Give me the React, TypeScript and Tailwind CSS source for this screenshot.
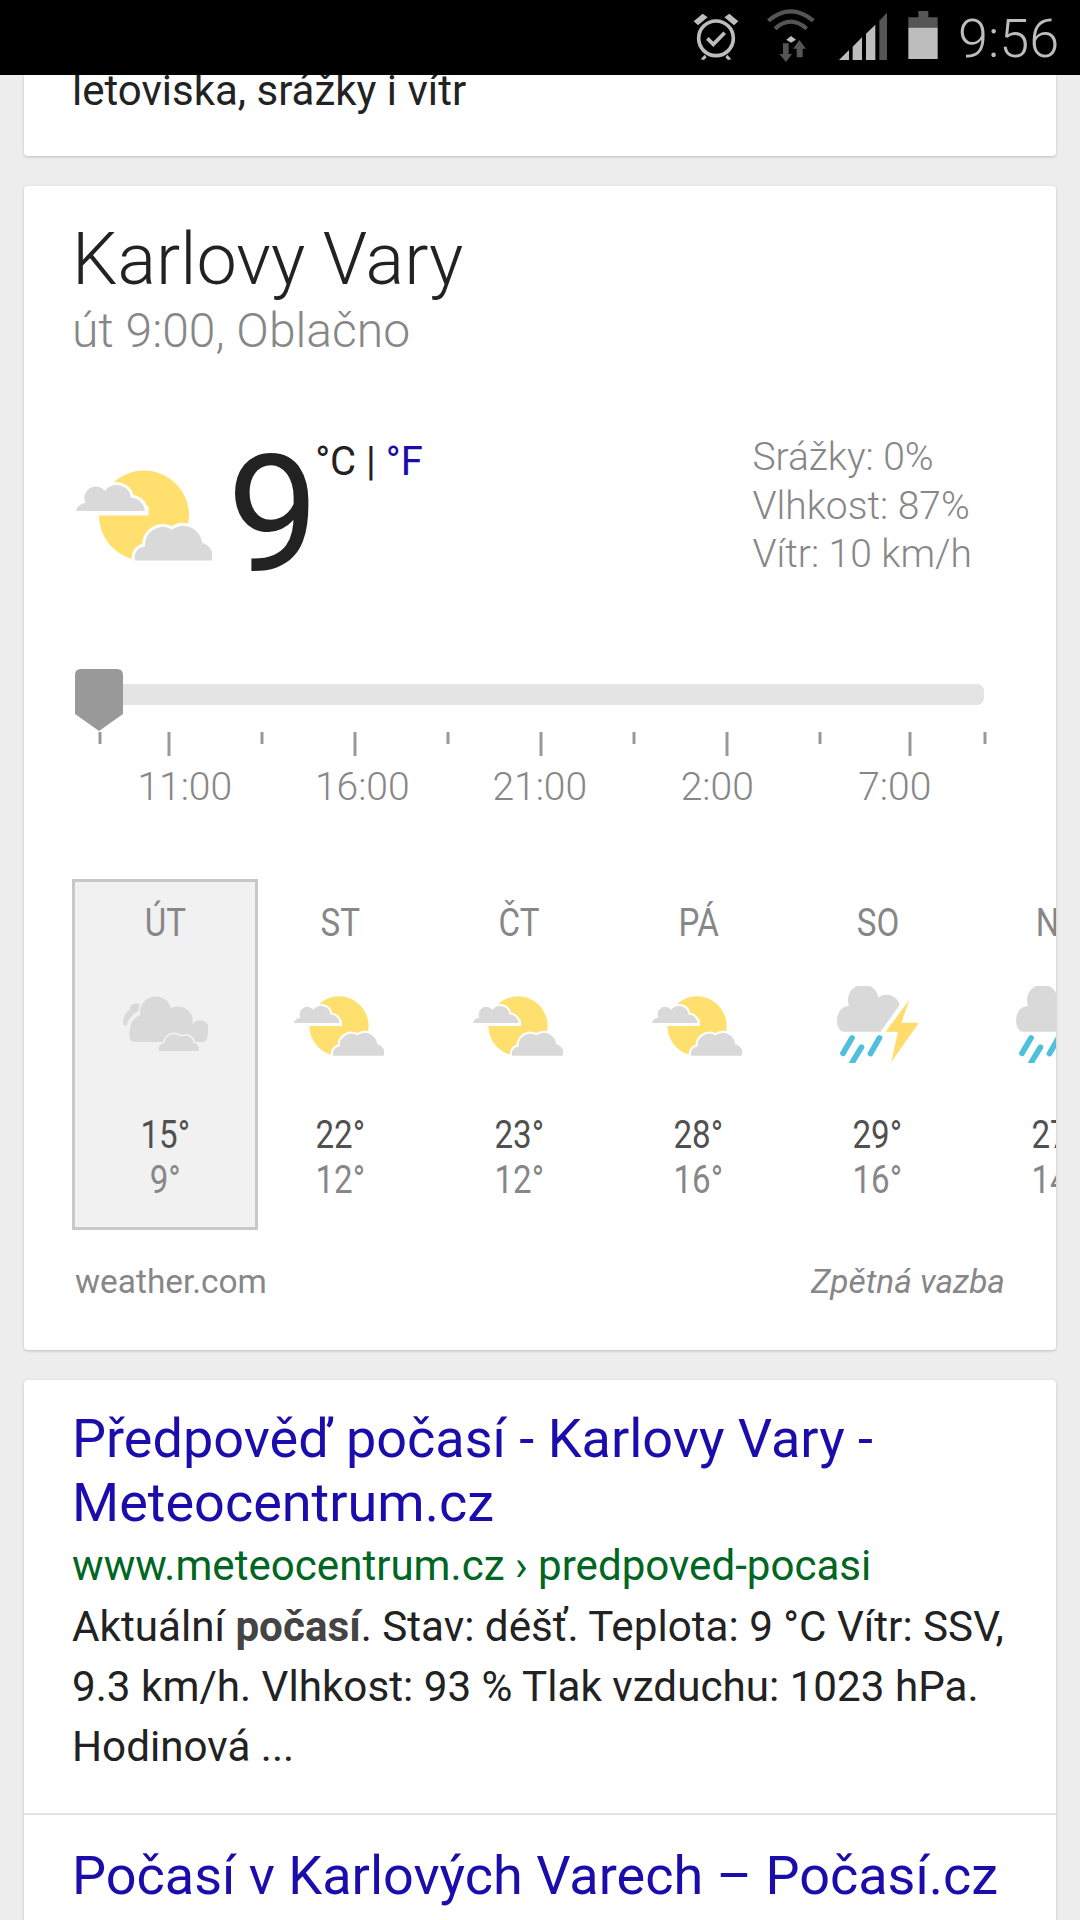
import React from 'react';

const GRAY = '#d9d9d9';

const PartlyCloudy: React.FC<{ className: string }> = ({ className }) => (
  <svg className={className} viewBox="0 0 136 91">
    <circle cx="68" cy="45.5" r="45" fill="#ffe06e" />
    <rect x="18" y="36" width="54.5" height="9.5" fill="#fff" />
    <path d="M0 41A11 9 0 0 1 9.5 33A11.5 11.5 0 0 1 29 21A14.5 14.5 0 0 1 55 27.5A15 15 0 0 1 69 41Z" fill={GRAY} stroke="#fff" strokeWidth="6" paintOrder="stroke" />
    <path d="M59 90.5A11 11 0 0 1 69 76.5A18 18 0 0 1 96 59.5A19 19 0 0 1 126 73A13 13 0 0 1 135.7 90.5Z" fill={GRAY} stroke="#fff" strokeWidth="6" paintOrder="stroke" />
  </svg>
);

const Cloudy: React.FC<{ className: string }> = ({ className }) => (
  <svg className={className} viewBox="188 375 255 168">
    <path d="M222 398Q238 394 238 404L234 420Q205 435 198 465Q186 465 189 445Q192 425 208 418Q206 402 222 398Z" fill={GRAY} />
    <path d="M222 513Q207 513 207 490Q207 445 240 432A47.1 47.1 0 0 1 332 412A44 44 0 0 1 396 460A27 27 0 0 1 442 490Q442 513 425 513Z" fill={GRAY} />
    <path d="M296 540A17 17 0 0 1 312 517A30 30 0 0 1 362 498A25 25 0 0 1 400 516A18 18 0 0 1 415 540Z" fill={GRAY} stroke="#f1f1f1" strokeWidth="10" paintOrder="stroke" />
  </svg>
);

const Storm: React.FC<{ className: string }> = ({ className }) => (
  <svg className={className} viewBox="170 108 248 230">
    <path d="M300 245L190 245Q170 240 170 210Q172 172 206 167A46 46 0 1 1 294 142A40 40 0 0 1 357 165Z" fill={GRAY} />
    <path d="M387 148L362 218L415 218L332 335L352 245L315 245Z" fill="#ffdc6b" />
    <path d="M188 309L215 263M215 337L243 291M270 310L297 263" stroke="#4fc0dc" strokeWidth="17" strokeLinecap="round" />
  </svg>
);

const days = [
  { name: 'ÚT', hi: '15°', lo: '9°', icon: 'cloudy' },
  { name: 'ST', hi: '22°', lo: '12°', icon: 'partly' },
  { name: 'ČT', hi: '23°', lo: '12°', icon: 'partly' },
  { name: 'PÁ', hi: '28°', lo: '16°', icon: 'partly' },
  { name: 'SO', hi: '29°', lo: '16°', icon: 'storm' },
  { name: 'NE', hi: '27°', lo: '14°', icon: 'storm' },
];

const ticks = [
  [100, 12], [169, 24], [262, 12], [355, 24], [448, 12], [541, 24], [634, 12], [727, 24], [820, 12], [910, 24], [985, 12],
];

const StatusBar: React.FC = () => (
  <div className="relative z-10 flex h-[75px] shrink-0 items-start bg-black">
    <svg className="ml-[660px] h-[75px] w-[298px]" viewBox="0 0 894 225">
      {/* alarm */}
      <circle cx="168" cy="115" r="52" fill="none" stroke="#bdbdbd" strokeWidth="11" />
      <path d="M142 115L160 133L194 98" fill="none" stroke="#bdbdbd" strokeWidth="11" />
      <path d="M101 64L128 41L143 52L114 76ZM235 64L208 41L193 52L222 76Z" fill="#bdbdbd" />
      <path d="M122 178L134 164L140 172L132 180ZM214 178L202 164L196 172L204 180Z" fill="#bdbdbd" />
      {/* wifi */}
      <path d="M325 62Q392 6 460 62" fill="none" stroke="#555" strokeWidth="12" />
      <path d="M345 86Q392 44 440 86" fill="none" stroke="#555" strokeWidth="12" />
      <path d="M379 119L393 108L408 119L393 128Z" fill="#bdbdbd" />
      <path d="M369 130H386V162H396L378 186L358 162H369Z" fill="#555" />
      <path d="M418 120L438 146H428V172H410V146H399Z" fill="#555" />
      {/* signal */}
      <path d="M537 180L567 150V180Z" fill="#bdbdbd" />
      <path d="M578 140L606 112V180H578Z" fill="#bdbdbd" />
      <path d="M618 101L646 74V180H618Z" fill="#bdbdbd" />
      <path d="M658 62L681 38V180H658Z" fill="#555" />
      {/* battery */}
      <path d="M775 33H805V52H833V83H745V52H775Z" fill="#555" />
      <rect x="745" y="83" width="88" height="94" fill="#bdbdbd" />
    </svg>
    <span className="font-['Roboto',sans-serif] text-[54px] leading-[78px] font-light text-[#bdbdbd]">9:56</span>
  </div>
);

const App: React.FC = () => {
  return (
    <div className="flex h-[1920px] w-[1080px] flex-col overflow-hidden bg-[#ededed] font-['Roboto',sans-serif]">
      <StatusBar />
      <div className="flex flex-col gap-[30px] px-[24px]">
        <div className="flex h-[81px] items-start overflow-hidden rounded-b-[4px] bg-white pl-[48px] shadow-[0_1px_3px_rgba(0,0,0,0.2)]">
          <p className="-mt-[9px] text-[42px] leading-[50px] text-[#222]">letoviska, srážky i vítr</p>
        </div>

        <div className="overflow-hidden rounded-[4px] bg-white pt-[36px] pb-[48px] shadow-[0_1px_3px_rgba(0,0,0,0.2)]">
          <div className="pl-[48px]">
            <h1 className="text-[72px] leading-[76px] font-light text-[#222]">Karlovy Vary</h1>
            <p className="mt-[9px] text-[48px] leading-[48px] font-light text-[#878787]">út 9:00, Oblačno</p>
          </div>

          <div className="mt-[75px] flex h-[170px] pl-[52px]">
            <PartlyCloudy className="mt-[40px] h-[91px] w-[136px]" />
            <span className="ml-[15px] text-[164px] leading-[170px] text-[#222]">9</span>
            <span className="mt-[10px] -ml-[4px] text-[40px] leading-[44px] text-[#222]">
              °C | <span className="text-[#1a0dab]">°F</span>
            </span>
            <div className="mt-[3px] ml-auto pr-[84px] text-[39px] leading-[48.5px] font-light text-[#878787]">
              <p>Srážky: 0%</p>
              <p>Vlhkost: 87%</p>
              <p>Vítr: 10 km/h</p>
            </div>
          </div>

          <div className="relative mt-[69px] pt-[15px] pl-[76px]">
            <div className="h-[21px] w-[884px] rounded-r-[7px] bg-[#e4e4e4]" />
            <svg className="absolute top-0 left-[51px] h-[62px] w-[48px]" viewBox="0 0 48 62">
              <path d="M6 0H42Q48 0 48 6V45L24 62L0 45V6Q0 0 6 0Z" fill="#999" />
            </svg>
            <svg className="mt-[27px] -ml-[76px] block h-[24px] w-[1032px]" viewBox="24 0 1032 24">
              {ticks.map(([x, h]) => (
                <rect key={x} x={x - 1.5} y="0" width="3" height={h} fill="#999" />
              ))}
            </svg>
          </div>

          <div className="mt-[9px] ml-[72px] flex text-[39px] leading-[44px] font-light text-[#878787]">
            {['11:00', '16:00', '21:00', '2:00', '7:00'].map((t) => (
              <span key={t} className="w-[177.5px] text-center">{t}</span>
            ))}
          </div>

          <div className="mt-[70px] ml-[48px] flex">
            {days.map((d, i) => (
              <div
                key={d.name}
                className={
                  i === 0
                    ? 'z-10 mr-[-7px] flex h-[351px] w-[186px] shrink-0 flex-col items-center border-[3px] border-[#c8c8c8] bg-[#f1f1f1] pt-[21px]'
                    : 'flex h-[351px] w-[179px] shrink-0 flex-col items-center border-[3px] border-transparent pt-[21px]'
                }
              >
                <span className="scale-x-[0.85] text-[39px] leading-[40px] text-[#878787]">{d.name}</span>
                <div className="mt-[53px] flex h-[60px] items-start justify-center">
                  {d.icon === 'cloudy' && <Cloudy className="h-[56px] w-[85px]" />}
                  {d.icon === 'partly' && <PartlyCloudy className="-ml-[3px] h-[60px] w-[90px]" />}
                  {d.icon === 'storm' && <Storm className="-mt-[10px] ml-[1px] h-[77px] w-[83px]" />}
                </div>
                <span className="mt-[57px] scale-x-[0.85] text-[39px] leading-[44px] text-[#505050]">{d.hi}</span>
                <span className="mt-px scale-x-[0.85] text-[39px] leading-[44px] text-[#878787]">{d.lo}</span>
              </div>
            ))}
          </div>

          <div className="mt-[32px] flex justify-between pr-[51px] pl-[51px] text-[33.4px] leading-[40px] text-[#878787]">
            <span>weather.com</span>
            <span className="italic">Zpětná vazba</span>
          </div>
        </div>

        <div className="rounded-[4px] bg-white pb-[60px] shadow-[0_1px_3px_rgba(0,0,0,0.2)]">
          <div className="border-b-[2px] border-[#e2e2e2] px-[48px] pt-[27px] pb-[36px]">
            <a className="block text-[54px] leading-[64px] text-[#1a0dab]">Předpověď počasí - Karlovy Vary - Meteocentrum.cz</a>
            <p className="text-[42.1px] leading-[62px] text-[#006621]">www.meteocentrum.cz › predpoved-pocasi</p>
            <p className="text-[42.2px] leading-[60px] text-[#222]">
              Aktuální <b className="text-[#444]">počasí</b>. Stav: déšť. Teplota: 9 °C Vítr: SSV, 9.3 km/h. Vlhkost: 93 % Tlak vzduchu: 1023 hPa. Hodinová ...
            </p>
          </div>
          <div className="px-[48px] pt-[29px]">
            <a className="block text-[54px] leading-[64px] text-[#1a0dab]">Počasí v Karlových Varech – Počasí.cz</a>
          </div>
        </div>
      </div>
    </div>
  );
};

export default App;
